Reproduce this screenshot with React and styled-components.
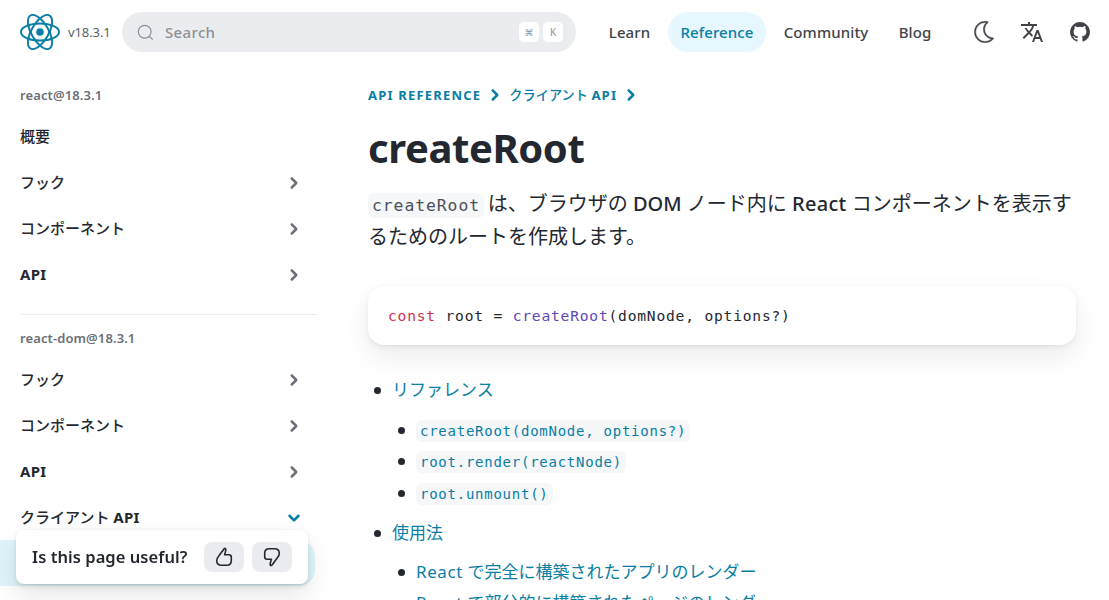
import React from 'react';
import styled, { createGlobalStyle } from 'styled-components';

const link = '#087ea4';
const ink = '#23272f';

const Global = createGlobalStyle`
  * { box-sizing: border-box; }
  body {
    margin: 0;
    height: 600px;
    overflow: hidden;
    background: #fff;
    color: ${ink};
    font-family: "Noto Sans", "Noto Sans CJK JP", sans-serif;
    -webkit-font-smoothing: antialiased;
  }
`;

const Page = styled.div`
  height: 600px;
  overflow: hidden;
`;
const Latin = styled.span`
  font-weight: ${(p) => p.$weight || 'inherit'};
  letter-spacing: ${(p) => p.$track || 0}px;
`;

const Header = styled.header`
  display: flex;
  align-items: center;
  height: 64px;
  padding: 0 17px 0 20px;
`;
const Version = styled.span`
  width: 54px;
  padding-left: 8px;
  font-size: 13px;
  letter-spacing: -0.1px;
  white-space: nowrap;
  color: #5b5f68;
`;
const SearchBox = styled.div`
  display: flex;
  align-items: center;
  width: 454px;
  height: 40px;
  margin-left: 8px;
  padding: 0 13px 0 15px;
  border-radius: 20px;
  background: #ebecef;
  color: #8e9096;
  font-size: 15px;
`;
const Placeholder = styled.span`
  flex: 1;
  margin-left: 11px;
  padding-bottom: 1px;
  font-weight: 500;
  letter-spacing: 0.35px;
`;
const Key = styled.kbd`
  display: flex;
  align-items: center;
  justify-content: center;
  width: 20px;
  height: 20px;
  margin-left: 4px;
  border-radius: 5px;
  background: #fff;
  color: #8e9096;
  font: ${(p) => p.$size || 10}px "Noto Sans", "DejaVu Sans", sans-serif;
`;
const Nav = styled.nav`
  display: flex;
  margin-left: 21px;
  gap: 6px;
`;
const NavLink = styled.a`
  display: flex;
  align-items: center;
  justify-content: center;
  width: ${(p) => p.$w}px;
  height: 40px;
  padding-bottom: 1px;
  border-radius: 20px;
  font-size: 15px;
  font-weight: 500;
  letter-spacing: 0.1px;
  color: ${(p) => (p.$active ? link : '#404248')};
  background: ${(p) => (p.$active ? '#e6f7ff' : 'transparent')};
`;
const Tools = styled.div`
  display: flex;
  align-items: center;
  gap: 24px;
  margin-left: auto;
  color: #404248;
  svg { display: block; }
`;

const Body = styled.div`
  display: flex;
`;
const Sidebar = styled.aside`
  width: 317px;
  padding-top: 20px;
  flex: none;
`;
const Group = styled.h3`
  margin: 0 0 6px 20px;
  height: 23px;
  line-height: 23px;
  font-size: 13px;
  font-weight: 600;
  letter-spacing: 0.1px;
  color: #6b6f78;
`;
const Item = styled.a`
  display: flex;
  align-items: center;
  justify-content: space-between;
  height: 46px;
  padding: 1px 13px 0 20px;
  font-size: 15px;
  font-weight: 500;
  svg { color: ${(p) => (p.$open ? link : '#6b6f78')}; }
`;
const ItemLabel = styled.span`
  padding-bottom: ${(p) => (p.$latin ? 1 : 2)}px;
  font-weight: ${(p) => (p.$latin ? 700 : 500)};
  letter-spacing: ${(p) => (p.$latin ? 0.3 : 0)}px;
`;
const Selected = styled.div`
  width: 315px;
  height: 46px;
  border-radius: 0 16px 16px 0;
  background: #dff4fb;
`;
const Rule = styled.hr`
  height: 1px;
  margin: 17px 0 12px 20px;
  border: 0;
  background: #ebecf0;
`;

const Main = styled.main`
  width: 708px;
  margin-left: 51px;
  padding-top: 19px;
`;
const Crumbs = styled.div`
  display: flex;
  align-items: center;
  height: 23px;
  font-size: 13px;
  font-weight: 500;
  color: ${link};
  svg { margin: 0 4px; }
`;
const CrumbJa = styled.span`
  font-size: 13.2px;
`;
const Title = styled.h1`
  margin: 17px 0 0;
  height: 50px;
  line-height: 50px;
  font-size: 40px;
  font-weight: 700;
  letter-spacing: -0.4px;
`;
const Intro = styled.p`
  margin: 14px -8px 0 0;
  font-size: 20px;
  line-height: 33px;
`;
const mono = '"DejaVu Sans Mono", monospace';
const Code = styled.code`
  margin-right: ${(p) => (p.$large ? -1.5 : 0)}px;
  padding: 3px 4px;
  border-radius: 6px;
  background: #f6f7f9;
  color: ${(p) => (p.$large ? '#4c4f57' : link)};
  font-family: ${mono};
  font-size: ${(p) => (p.$large ? 16.4 : 14)}px;
  letter-spacing: ${(p) => (p.$large ? 0.93 : 0.75)}px;
  line-height: 1;
`;
const CodeBlock = styled.pre`
  height: 59px;
  margin: 33px 0 0;
  padding: 0 20px;
  border-radius: 16px;
  background: #fff;
  box-shadow: 0 0.8px 2px rgba(0, 0, 0, 0.032), 0 2.7px 6.7px rgba(0, 0, 0, 0.048), 0 12px 30px rgba(0, 0, 0, 0.08);
  font-family: ${mono};
  font-size: 14.6px;
  letter-spacing: 0.8px;
  line-height: 60px;
`;
const Keyword = styled.span`color: #d0314f;`;
const Fn = styled.span`color: #6147b8;`;

const List = styled.ul`
  margin: ${(p) => p.$top}px 0 0;
  padding-left: 24px;
  list-style: none;
  font-size: 17px;
`;
const Entry = styled.li`
  line-height: 31.5px;
  margin-bottom: ${(p) => p.$gap || 0}px;
  &::before {
    content: '';
    float: left;
    width: 7px;
    height: 7px;
    margin: 13px 0 0 -18px;
    border-radius: 50%;
    background: ${ink};
  }
`;
const CodeEntry = styled(Entry)`
  height: 31.5px;
`;
const Anchor = styled.a`color: ${link};`;

const Feedback = styled.div`
  position: fixed;
  left: 16px;
  bottom: 16px;
  display: flex;
  align-items: center;
  gap: 8px;
  width: 292px;
  height: 54px;
  padding: 0 16px;
  border-radius: 8px;
  background: #fff;
  box-shadow: 0 0.8px 2px rgba(0, 0, 0, 0.06), 0 2.7px 6.7px rgba(0, 0, 0, 0.1), 0 12px 30px rgba(0, 0, 0, 0.1);
`;
const Question = styled.span`
  flex: none;
  width: 164px;
  padding-bottom: 2px;
  font-size: 16.5px;
  font-weight: 600;
  letter-spacing: 0.05px;
  white-space: nowrap;
`;
const Vote = styled.button`
  display: flex;
  flex: none;
  align-items: center;
  justify-content: center;
  width: 40px;
  height: 30px;
  padding: 0;
  border: 0;
  border-radius: 8px;
  background: #ebecef;
  color: ${ink};
`;

const Logo = () => (
  <svg width="40" height="36" viewBox="-10.5 -9.45 21 18.9" fill="none" stroke={link}>
    <circle r="2" fill={link} stroke="none" />
    <ellipse rx="10" ry="4.5" />
    <ellipse rx="10" ry="4.5" transform="rotate(60)" />
    <ellipse rx="10" ry="4.5" transform="rotate(120)" />
  </svg>
);
const SearchIcon = () => (
  <svg width="17" height="17" viewBox="0 0 20 20" fill="none" stroke="currentColor" strokeWidth="1.4" strokeLinecap="round">
    <path d="M14.386 14.386l4.0877 4.0877-4.0877-4.0877c-2.9418 2.9419-7.7115 2.9419-10.6533 0-2.9419-2.9418-2.9419-7.7115 0-10.6533 2.9418-2.9419 7.7115-2.9419 10.6533 0 2.9419 2.9418 2.9419 7.7115 0 10.6533z" />
  </svg>
);
const Chevron = ({ down }) => (
  <svg width="20" height="20" viewBox="0 0 20 20" fill="currentColor">
    <path transform={down ? 'rotate(90 10 10)' : undefined} d="M6.86612 13.6161C6.37796 14.1043 6.37796 14.8957 6.86612 15.3839C7.35427 15.872 8.14572 15.872 8.63388 15.3839L13.1339 10.8839C13.622 10.3957 13.622 9.60428 13.1339 9.11612L8.63388 4.61612C8.14572 4.12797 7.35427 4.12797 6.86612 4.61612C6.37796 5.10428 6.37796 5.89573 6.86612 6.38388L10.4822 10L6.86612 13.6161Z" />
  </svg>
);
const Moon = () => (
  <svg width="24" height="22" viewBox="90.2 11.7 22 24.6" fill="currentColor" stroke="currentColor" strokeWidth="0.5">
    <path d="M102,21 C102,18.1017141 103.307179,15.4198295 105.51735,13.6246624 C106.001939,13.2310647 105.821611,12.4522936 105.21334,12.3117518 C104.322006,12.1058078 103.414758,12 102.5,12 C95.8722864,12 90.5,17.3722864 90.5,24 C90.5,30.6277136 95.8722864,36 102.5,36 C106.090868,36 109.423902,34.4109093 111.690274,31.7128995 C112.091837,31.2348572 111.767653,30.5041211 111.143759,30.4810139 C106.047479,30.2922628 102,26.1097349 102,21 Z M102.5,34.5 C96.7007135,34.5 92,29.7992865 92,24 C92,18.2007135 96.7007135,13.5 102.5,13.5 C102.807386,13.5 103.113925,13.5136793 103.419249,13.5407785 C101.566047,15.5446378 100.5,18.185162 100.5,21 C100.5,26.3198526 104.287549,30.7714322 109.339814,31.7756638 L109.516565,31.8092927 C107.615276,33.5209452 105.138081,34.5 102.5,34.5 Z" fillRule="evenodd" />
  </svg>
);
const Translate = () => (
  <svg width="24" height="24" viewBox="0 0 24 24" fill="currentColor">
    <path d="M12.87 15.07l-2.54-2.51.03-.03c1.74-1.94 2.98-4.17 3.71-6.53H17V4h-7V2H8v2H1v1.99h11.17C11.5 7.92 10.44 9.75 9 11.35 8.07 10.32 7.3 9.19 6.69 8h-2c.73 1.63 1.73 3.17 2.98 4.56l-5.09 5.02L4 19l5-5 3.11 3.11.76-2.04zM18.5 10h-2L12 22h2l1.12-3h4.75L21 22h2l-4.5-12zm-2.62 7l1.62-4.33L19.12 17h-3.24z" />
  </svg>
);
const Github = () => (
  <svg width="24" height="24" viewBox="-2 -2 24 24" fill="currentColor">
    <path d="M10 0a10 10 0 0 0-3.16 19.49c.5.1.68-.22.68-.48l-.01-1.7c-2.78.6-3.37-1.34-3.37-1.34-.46-1.16-1.11-1.47-1.11-1.47-.9-.62.07-.6.07-.6 1 .07 1.53 1.03 1.53 1.03.9 1.52 2.34 1.08 2.91.83.1-.65.35-1.09.63-1.34-2.22-.25-4.55-1.11-4.55-4.94 0-1.1.39-1.99 1.03-2.69a3.6 3.6 0 0 1 .1-2.64s.84-.27 2.75 1.02a9.58 9.58 0 0 1 5 0c1.91-1.3 2.75-1.02 2.75-1.02.55 1.37.2 2.4.1 2.64.64.7 1.03 1.6 1.03 2.69 0 3.84-2.34 4.68-4.57 4.93.36.31.68.92.68 1.85l-.01 2.75c0 .26.18.58.69.48A10 10 0 0 0 10 0" />
  </svg>
);
const Thumb = ({ down }) => (
  <svg width="18" height="20" viewBox="0 0 18 20" fill="none" stroke="currentColor" strokeWidth="1.6" strokeLinejoin="round">
    <path transform={down ? 'rotate(180 9 10)' : undefined} d="M9 1.9C9.7 1 10.8 1.4 10.8 2.5C10.8 4.4 10 6.2 9.6 7.8H13.8C15.4 7.8 16.3 8.8 16.3 10.3V13.8C16.3 16.6 14.6 18.2 11.8 18.2H6.6C3.6 18.2 1.7 16.6 1.7 13.8C1.7 11.8 2.2 10.8 3.6 9.2C5.6 6.7 7 4.6 9 1.9Z" />
  </svg>
);

export default function App() {
  return (
    <Page>
      <Global />
      <Header>
        <Logo />
        <Version>v18.3.1</Version>
        <SearchBox>
          <SearchIcon />
          <Placeholder>Search</Placeholder>
          <Key $size={9}>⌘</Key>
          <Key>K</Key>
        </SearchBox>
        <Nav>
          <NavLink $w={65}>Learn</NavLink>
          <NavLink $w={98} $active>Reference</NavLink>
          <NavLink $w={108}>Community</NavLink>
          <NavLink $w={58}>Blog</NavLink>
        </Nav>
        <Tools>
          <Moon />
          <Translate />
          <Github />
        </Tools>
      </Header>
      <Body>
        <Sidebar>
          <Group>react@18.3.1</Group>
          <Item><ItemLabel>概要</ItemLabel></Item>
          <Item><ItemLabel>フック</ItemLabel><Chevron /></Item>
          <Item><ItemLabel>コンポーネント</ItemLabel><Chevron /></Item>
          <Item><ItemLabel $latin>API</ItemLabel><Chevron /></Item>
          <Rule />
          <Group>react-dom@18.3.1</Group>
          <Item><ItemLabel>フック</ItemLabel><Chevron /></Item>
          <Item><ItemLabel>コンポーネント</ItemLabel><Chevron /></Item>
          <Item><ItemLabel $latin>API</ItemLabel><Chevron /></Item>
          <Item $open><ItemLabel>クライアント <Latin $weight={700} $track={0.3}>API</Latin></ItemLabel><Chevron down /></Item>
          <Selected />
        </Sidebar>
        <Main>
          <Crumbs>
            <Latin $weight={700} $track={1.2}>API REFERENCE</Latin><Chevron />
            <CrumbJa>クライアント <Latin $weight={700} $track={1.1}>API</Latin></CrumbJa><Chevron />
          </Crumbs>
          <Title>createRoot</Title>
          <Intro>
            <Code $large>createRoot</Code> は、ブラウザの <Latin $weight={500}>DOM</Latin> ノード内に <Latin $weight={500} $track={0.3}>React</Latin> コンポーネントを表示するためのルートを作成します。
          </Intro>
          <CodeBlock><Keyword>const</Keyword> root = <Fn>createRoot</Fn>(domNode, options?)</CodeBlock>
          <List $top={29}>
            <Entry $gap={9}>
              <Anchor>リファレンス</Anchor>
              <List $top={8}>
                <CodeEntry><Anchor><Code>createRoot(domNode, options?)</Code></Anchor></CodeEntry>
                <CodeEntry><Anchor><Code>root.render(reactNode)</Code></Anchor></CodeEntry>
                <CodeEntry><Anchor><Code>root.unmount()</Code></Anchor></CodeEntry>
              </List>
            </Entry>
            <Entry>
              <Anchor>使用法</Anchor>
              <List $top={7}>
                <Entry><Anchor><Latin $track={0.6}>React</Latin> で完全に構築されたアプリのレンダー</Anchor></Entry>
                <Entry><Anchor><Latin $track={0.6}>React</Latin> で部分的に構築されたページのレンダー</Anchor></Entry>
              </List>
            </Entry>
          </List>
        </Main>
      </Body>
      <Feedback>
        <Question>Is this page useful?</Question>
        <Vote><Thumb /></Vote>
        <Vote><Thumb down /></Vote>
      </Feedback>
    </Page>
  );
}
